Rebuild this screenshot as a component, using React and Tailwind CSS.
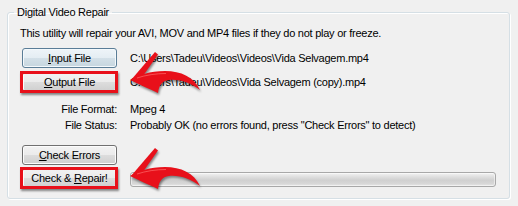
import React from "react";

function WinButton({ children, focused = false, highlight = false }) {
  const base =
    "relative w-[95px] h-[20px] rounded-[3px] border text-[11px] leading-none flex items-center justify-center text-black";
  const normal =
    "border-[#707070] bg-[linear-gradient(to_bottom,#f2f2f2_0%,#ebebeb_50%,#dddddd_50%,#cfcfcf_100%)] shadow-[inset_0_0_0_1px_#fcfcfc]";
  const focus =
    "border-[#5a7d97] bg-[linear-gradient(to_bottom,#eef4f8_0%,#e4edf3_50%,#d3e0e8_50%,#c6d6df_100%)] shadow-[inset_0_0_0_1px_#f4f9fc]";
  return (
    <div className={`${base} ${focused ? focus : normal}`}>
      {children}
      {highlight && (
        <span className="absolute -top-[2px] -bottom-[2px] -left-[3px] -right-[2px] border-[3px] border-[#e8101a] shadow-[1px_2px_2px_rgba(0,0,0,0.45)] pointer-events-none" />
      )}
    </div>
  );
}

function Arrow({ dy = 0 }) {
  return (
    <g transform={`translate(0 ${dy})`}>
      <path d="M131,80 L155,52 L158,54.5 L138,83 Z" fill="#e8101a" />
      <path
        d="M130,80 C138,75 150,71 165,71 C181,71 194,77 200,90 C191,83 180,79 169,80 C162,81 159,85 158,93 C150,89 140,85 130,80 Z"
        fill="#e8101a"
      />
      <path
        d="M137,78 C146,75 156,73.5 166,73.5"
        stroke="#ff6a6a"
        strokeWidth="1"
        fill="none"
        opacity="0.7"
      />
    </g>
  );
}

export default function App() {
  return (
    <div className="relative w-[518px] h-[206px] overflow-hidden bg-[#f0f0f0] font-['Liberation_Sans',Arial,sans-serif] text-[11px] text-black tracking-[-0.25px]">
      <fieldset className="ml-[7px] mt-[5px] w-[503px] h-[194px] rounded-[3px] border border-[#d5dfe5] shadow-[inset_1px_1px_0_#ffffff,1px_1px_0_#ffffff]">
        <legend className="ml-[6px] px-[3px] leading-[14px]">Digital Video Repair</legend>
        <div className="flex flex-col pl-[14px]">
          <div className="-ml-[2px] mt-[7px] leading-[14px]">
            This utility will repair your AVI, MOV and MP4 files if they do not play or freeze.
          </div>
          <div className="mt-[8px] flex items-center gap-[13px]">
            <WinButton focused>
              <span>
                <span className="underline">I</span>nput File
              </span>
            </WinButton>
            <span className="leading-[14px]">C:\Users\Tadeu\Videos\Videos\Vida Selvagem.mp4</span>
          </div>
          <div className="mt-[4px] flex items-center gap-[13px]">
            <WinButton highlight>
              <span>
                <span className="underline">O</span>utput File
              </span>
            </WinButton>
            <span className="leading-[14px]">C:\Users\Tadeu\Videos\Vida Selvagem (copy).mp4</span>
          </div>
          <div className="mt-[9px] flex items-center gap-[13px] h-[16px]">
            <span className="w-[95px] text-right">File Format:</span>
            <span>Mpeg 4</span>
          </div>
          <div className="flex items-center gap-[13px] h-[16px]">
            <span className="w-[95px] text-right">File Status:</span>
            <span>Probably OK (no errors found, press "Check Errors" to detect)</span>
          </div>
          <div className="mt-[12px] flex items-center gap-[13px]">
            <WinButton>
              <span>
                <span className="underline">C</span>heck Errors
              </span>
            </WinButton>
          </div>
          <div className="mt-[3px] flex items-start gap-[13px]">
            <WinButton highlight>
              <span>
                Check &amp; <span className="underline">R</span>epair!
              </span>
            </WinButton>
            <div className="mt-[4px] w-[366px] h-[15px] rounded-[3px] border border-[#a8a8a8] bg-[linear-gradient(to_bottom,#f4f4f4_0%,#e2e2e2_25%,#d0d0d0_55%,#d6d6d6_80%,#e6e6e6_100%)] shadow-[inset_0_0_0_1px_rgba(255,255,255,0.5)]" />
          </div>
        </div>
      </fieldset>
      <svg
        className="absolute left-0 top-0 pointer-events-none drop-shadow-[1px_2px_1px_rgba(0,0,0,0.45)]"
        width="518"
        height="206"
        viewBox="0 0 518 206"
      >
        <Arrow dy={0} />
        <Arrow dy={96} />
      </svg>
    </div>
  );
}
